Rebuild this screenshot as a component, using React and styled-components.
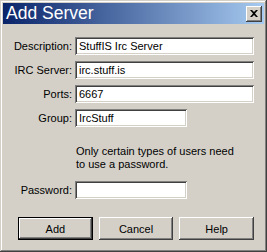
import React from 'react';
import styled, { createGlobalStyle } from 'styled-components';

const GlobalStyle = createGlobalStyle`
  html, body {
    margin: 0;
    padding: 0;
    background: #d4d0c8;
  }
  * {
    box-sizing: border-box;
  }
`;

const FIELDS = [
  { label: 'Description:', value: 'StuffIS Irc Server', wide: true },
  { label: 'IRC Server:', value: 'irc.stuff.is', wide: true },
  { label: 'Ports:', value: '6667', wide: true },
  { label: 'Group:', value: 'IrcStuff', wide: false },
];

function App() {
  return (
    <>
      <GlobalStyle />
      <Window>
        <TitleBar>
          <Title>Add Server</Title>
          <CloseButton aria-label="Close">
            <svg width="8" height="7" viewBox="0 0 8 7">
              <path d="M0 0h2l2 2 2-2h2L5 3.5 8 7H6L4 5 2 7H0l3-3.5z" fill="#000" />
            </svg>
          </CloseButton>
        </TitleBar>

        <Form>
          {FIELDS.map(f => (
            <Row key={f.label}>
              <Label>{f.label}</Label>
              <Field $wide={f.wide}>{f.value}</Field>
            </Row>
          ))}

          <Note>
            Only certain types of users need
            <br />
            to use a password.
          </Note>

          <Row $top={10}>
            <Label>Password:</Label>
            <Field $wide={false} />
          </Row>

          <Buttons>
            <Button $default>Add</Button>
            <Button>Cancel</Button>
            <Button>Help</Button>
          </Buttons>
        </Form>
      </Window>
    </>
  );
}

// --- Styles ---
const Window = styled.div`
  width: 267px;
  height: 252px;
  padding: 3px;
  background: #d4d0c8;
  box-shadow:
    inset -1px -1px #404040,
    inset 1px 1px #d4d0c8,
    inset -2px -2px #808080,
    inset 2px 2px #ffffff;
  font-family: "Liberation Sans", Arial, sans-serif;
  font-size: 11px;
  color: #000;
`;

const TitleBar = styled.div`
  height: 21px;
  display: flex;
  align-items: center;
  justify-content: space-between;
  padding: 0 2px 0 3px;
  background: linear-gradient(to right, #0a246a, #a6caf0);
`;

const Title = styled.span`
  color: #fff;
  font-size: 17.5px;
  line-height: 21px;
`;

const CloseButton = styled.div`
  width: 16px;
  height: 16px;
  display: flex;
  align-items: center;
  justify-content: center;
  background: #d4d0c8;
  box-shadow:
    inset -1px -1px #404040,
    inset 1px 1px #ffffff,
    inset -2px -2px #808080;
`;

const Form = styled.div`
  display: flex;
  flex-direction: column;
  padding: 13px 10px 0 0;
`;

const Row = styled.div`
  display: grid;
  grid-template-columns: 69px 1fr;
  column-gap: 3px;
  align-items: center;
  margin-top: ${({ $top }) => ($top ?? 6)}px;

  &:first-child {
    margin-top: 0;
  }
`;

const Label = styled.span`
  text-align: right;
  white-space: nowrap;
`;

const Field = styled.div`
  width: ${({ $wide }) => ($wide ? '100%' : '112px')};
  height: 18px;
  padding: 0 4px;
  line-height: 18px;
  background: #fff;
  white-space: nowrap;
  overflow: hidden;
  box-shadow:
    inset 1px 1px #808080,
    inset -1px -1px #ffffff,
    inset 2px 2px #404040,
    inset -2px -2px #d4d0c8;
`;

const Note = styled.div`
  margin: 18px 0 0 73px;
  line-height: 13px;
`;

const Buttons = styled.div`
  display: flex;
  gap: 6px;
  margin: 18px 0 0 15px;
`;

const Button = styled.div`
  width: 75px;
  height: 23px;
  display: flex;
  align-items: center;
  justify-content: center;
  background: #d4d0c8;
  border: ${({ $default }) => ($default ? '1px solid #000' : 'none')};
  box-shadow:
    inset -1px -1px #404040,
    inset 1px 1px #ffffff,
    inset -2px -2px #808080;
`;

export default App;
